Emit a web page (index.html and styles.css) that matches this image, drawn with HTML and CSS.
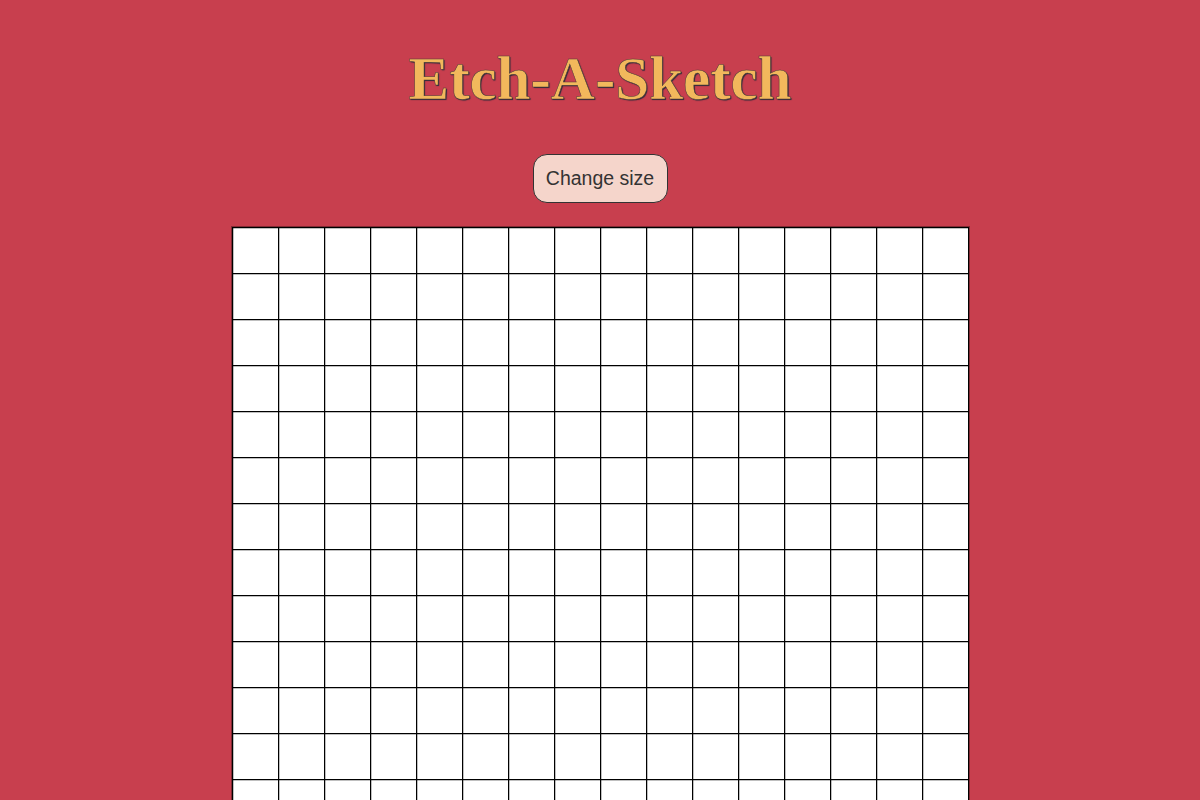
FILE: index.html
```html
<!DOCTYPE html>
<html>
<head>
<meta charset="utf-8">
<link rel="stylesheet" href="styles.css">
</head>
<body>
<h1 class="title">Etch-A-Sketch</h1>
<button class="size-btn">Change size</button>
<div class="grid" id="grid"></div>
<script>
const g = document.getElementById('grid');
for (let i = 0; i < 256; i++) {
  const c = document.createElement('div');
  c.className = 'cell';
  g.appendChild(c);
}
</script>
</body>
</html>
```
FILE: styles.css
```css
html, body {
  margin: 0;
  padding: 0;
}
body {
  background: #c83f4e;
  display: flex;
  flex-direction: column;
  align-items: center;
  font-family: "Liberation Sans", Arial, sans-serif;
}
.title {
  font-family: "Liberation Serif", "Times New Roman", serif;
  font-weight: bold;
  font-size: 61px;
  color: #f2b85c;
  -webkit-text-stroke: 0.5px #4a3a3a;
  text-shadow: 1px 1px 1px #2b2b3a;
  margin: 44px 0 0 0;
  line-height: 70px;
}
.size-btn {
  margin-top: 40px;
  font-family: "Liberation Sans", Arial, sans-serif;
  font-size: 19.5px;
  color: #333;
  background: #f5d5cb;
  border: 1px solid #333;
  border-radius: 14px;
  padding: 0;
  height: 49px;
  width: 135px;
}
.grid {
  margin-top: 24px;
  display: grid;
  grid-template-columns: repeat(16, 45px);
  grid-auto-rows: 45px;
  gap: 1px;
  padding: 1px;
  background: #000;
  box-shadow: 0 0 0 1px rgba(0, 0, 0, 0.35);
}
.cell {
  background: #fff;
  box-shadow: inset 1px 0 0 rgba(0, 0, 0, 0.25), inset 0 1px 0 rgba(0, 0, 0, 0.25);
}
```
